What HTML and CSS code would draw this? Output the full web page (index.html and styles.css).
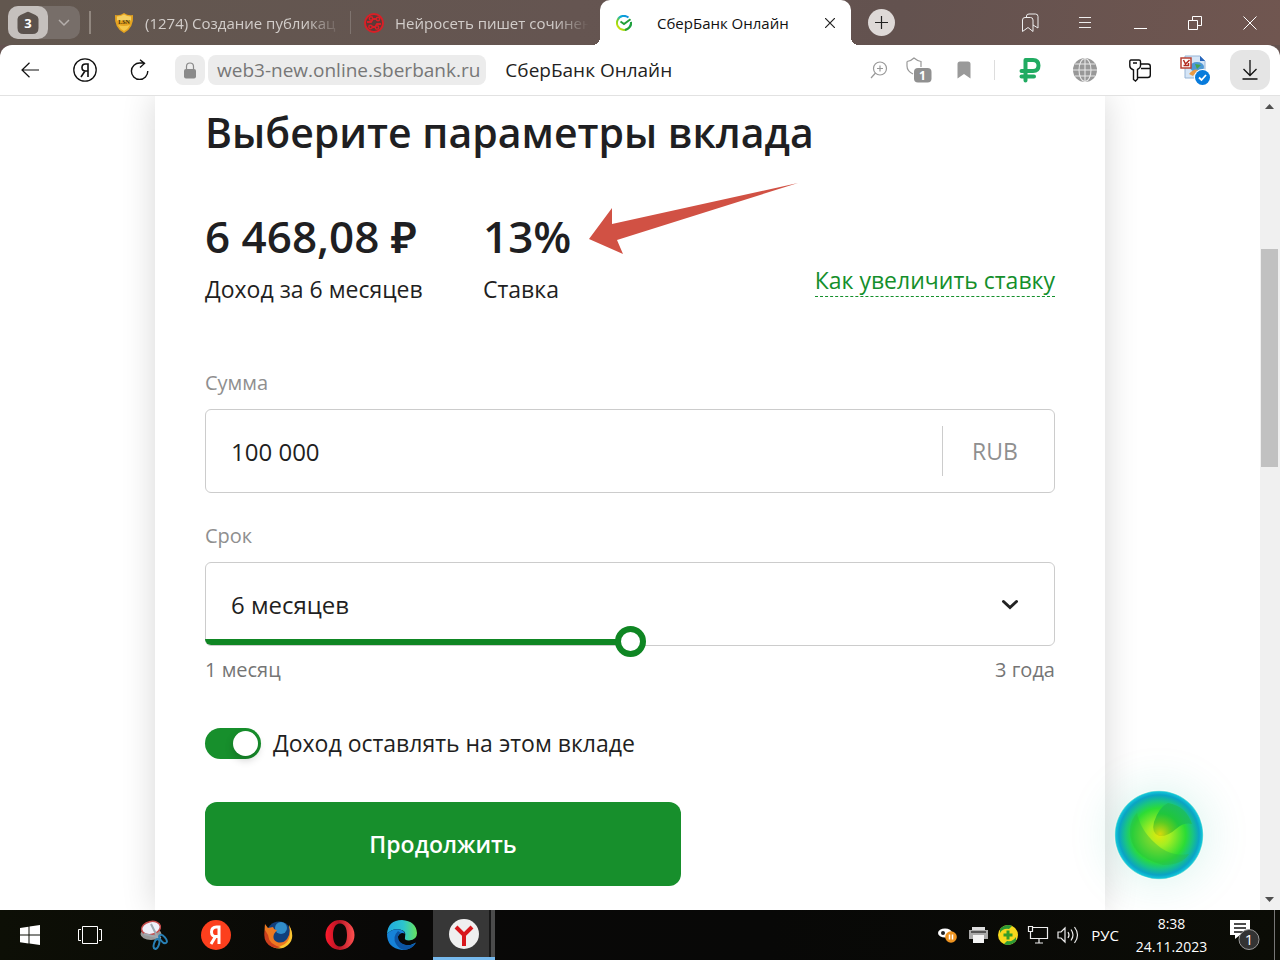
FILE: index.html
```html
<!DOCTYPE html>
<html lang="ru">
<head>
<meta charset="utf-8">
<title>СберБанк Онлайн</title>
<link rel="stylesheet" href="styles.css">
</head>
<body class="desktop">
<header class="tabstrip">
  <div class="tab-group">
    <button class="tab-count" aria-label="Группа вкладок">
      <svg width="22" height="24" viewBox="0 0 22 24"><path d="M9 1.500q2-1.300 4 0l5.500 2.500Q21.500 5.500 21.500 8v9q0 6-6 6h-9q-6 0-6-6V8Q.5 5.500 3.500 4z" fill="#5b524d"/></svg>
      <span class="tab-count-num">3</span>
    </button>
    <button class="tab-expand" aria-label="Показать группы"><svg width="12" height="8" viewBox="0 0 12 8"><path d="M1 1l5 5 5-5" fill="none" stroke="#b5afac" stroke-width="1.500"/></svg></button>
  </div>
  <i class="strip-line"></i>
  <button class="tab tab-first">
    <svg width="20" height="20" viewBox="0 0 20 20"><path d="M1 2q5 1 9-2 4 3 9 2 1 13-9 18Q0 15 1 2z" fill="#e5a420"/><path d="M3 3.500q4 0 7-2 3 2 7 2v4H3z" fill="#f3cf62"/><path d="M4 12q6 2 12 0-2 4-6 6-4-2-6-6z" fill="#f5c84b"/><text x="10" y="10.500" text-anchor="middle" class="lsn">LSN</text></svg>
    <span class="tab-title">(1274) Создание публикац</span>
  </button>
  <i class="strip-line thin"></i>
  <button class="tab tab-second">
    <svg width="20" height="20" viewBox="0 0 20 20"><circle cx="10" cy="10" r="9" fill="#5c3a38" stroke="#d91f26" stroke-width="2"/><path d="M3 9h4l2-3h4M17 11h-4l-2 3H8" fill="none" stroke="#d91f26" stroke-width="1.800"/><g fill="#5c3a38" stroke="#d91f26" stroke-width="1.500"><circle cx="7" cy="5.500" r="1.700"/><circle cx="14" cy="6" r="1.700"/><circle cx="6.500" cy="14" r="1.700"/><circle cx="13" cy="14.500" r="1.700"/></g></svg>
    <span class="tab-title">Нейросеть пишет сочинен</span>
  </button>
  <div class="tab-active">
    <svg width="16" height="16" viewBox="0 0 16 16"><defs><linearGradient id="sb" x1="0" y1="1" x2="1" y2="0"><stop offset="0" stop-color="#f4e600"/><stop offset=".35" stop-color="#7ed321"/><stop offset=".6" stop-color="#0cadd6"/><stop offset="1" stop-color="#1080e0"/></linearGradient></defs><path d="M12.500 2.600A7 7 0 1 0 14.900 7" fill="none" stroke="url(#sb)" stroke-width="2"/><path d="M15 7A7 7 0 0 1 9 14.900" fill="none" stroke="#21a038" stroke-width="2"/><path d="M4.500 6.500L8 9l6.500-4.800" fill="none" stroke="#21a038" stroke-width="2"/></svg>
    <span class="tab-active-title">СберБанк Онлайн</span>
    <button class="icon-btn" aria-label="Закрыть вкладку"><svg width="10" height="10" viewBox="0 0 10 10"><path d="M0 0l10 10M10 0L0 10" stroke="#222" stroke-width="1.200"/></svg></button>
  </div>
  <button class="tab-new" aria-label="Новая вкладка"><svg width="13" height="13" viewBox="0 0 13 13"><path d="M6.500 0v13M0 6.500h13" stroke="#222" stroke-width="1.200"/></svg></button>
  <div class="window-btns">
    <button class="win-btn" aria-label="Закладки"><svg width="18" height="20" viewBox="0 0 18 20" fill="none" stroke="#eee"><path d="M1.500 18.500V7q0-2.500 2.500-2.500h5.500Q12 4.500 12 7v11.500l-5-4z"/><path d="M5.500 4.500V3Q5.500 1 8 1h6.500Q17 1 17 3.500v11.500l-5-3"/></svg></button>
    <button class="win-btn" aria-label="Меню"><svg width="12" height="12" viewBox="0 0 12 12"><path d="M0 .5h12M0 5.500h12M0 10.500h12" stroke="#eee"/></svg></button>
    <button class="win-btn" aria-label="Свернуть"><svg width="14" height="14" viewBox="0 0 14 14"><path d="M1 12.500h13" stroke="#fff"/></svg></button>
    <button class="win-btn" aria-label="Развернуть"><svg width="14" height="14" viewBox="0 0 14 14" fill="none" stroke="#fff"><path d="M.5 4.500h9v9h-9zM4.500 4.500v-4h9v9h-4"/></svg></button>
    <button class="win-btn" aria-label="Закрыть"><svg width="14" height="14" viewBox="0 0 14 14"><path d="M.5.5l13 13M13.500.5l-13 13" stroke="#fff"/></svg></button>
  </div>
</header>

<nav class="toolbar">
  <div class="nav-btns">
    <button class="nav-btn" aria-label="Назад"><svg width="18" height="16" viewBox="0 0 18 16"><path d="M18 8H1M8.500.8L1 8l7.500 7.200" fill="none" stroke="#111" stroke-width="1.200"/></svg></button>
    <button class="nav-btn" aria-label="Яндекс"><svg width="24" height="24" viewBox="0 0 24 24" fill="none" stroke="#111" stroke-width="1.300"><circle cx="12" cy="12" r="11.200"/><path d="M15 19V6h-2.500Q9 6 9 9.500T12.500 13H15M12 13l-4 6" stroke-width="1.600"/></svg></button>
    <button class="nav-btn" aria-label="Обновить"><svg width="20" height="22" viewBox="0 0 20 22" fill="none" stroke="#111" stroke-width="1.400"><path d="M17.800 12A8.200 8.200 0 1 1 10 4h4.500M10 .7L14.500 4.400 10 8.500"/></svg></button>
  </div>
  <button class="lock" aria-label="Защищено"><svg width="12" height="17" viewBox="0 0 12 17"><path d="M2.500 8V4.500a3.500 3.500 0 0 1 7 0V8" fill="none" stroke="#8a8a8a" stroke-width="1.200"/><rect y="7" width="12" height="9.500" rx="2" fill="#8a8a8a"/></svg></button>
  <button class="url">web3-new.online.sberbank.ru</button>
  <span class="page-title">СберБанк Онлайн</span>
  <div class="page-tools">
    <button class="icon-btn" aria-label="Масштаб"><svg width="18" height="18" viewBox="0 0 18 18" fill="none" stroke="#999" stroke-width="1.200"><circle cx="10" cy="7.500" r="6.500"/><path d="M5.500 12L1 17M10 4.500v6M7 7.500h6"/></svg></button>
    <button class="icon-btn" aria-label="Защита"><svg width="26" height="26" viewBox="0 0 26 26"><path d="M1 4.500Q5 4 8 1q3.500 3 7 3.500V10M1 4.500V9q0 5 6 8" fill="none" stroke="#999" stroke-width="1.200"/><rect x="8" y="11" width="17.500" height="14.500" rx="4" fill="#909090"/><text x="16.500" y="23" text-anchor="middle" class="badge-num">1</text></svg></button>
    <button class="icon-btn" aria-label="В закладки"><svg width="14" height="18" viewBox="0 0 14 18"><path d="M.5 17.500V3q0-2.500 2.500-2.500h8q2.500 0 2.500 2.500v14.500L7 13z" fill="#999"/></svg></button>
  </div>
  <i class="tool-line"></i>
  <div class="ext-tools">
    <button class="ext-btn" aria-label="Кэшбэк"><svg width="22" height="26" viewBox="0 0 22 26"><path d="M6.500 23.500V3H14q5.500 0 5.500 5.500T14 14H2.500M2.500 19.500H15" fill="none" stroke="#21ab62" stroke-width="4" stroke-linecap="round" stroke-linejoin="round"/></svg></button>
    <button class="ext-btn" aria-label="Сеть"><svg width="24" height="24" viewBox="0 0 24 24"><circle cx="12" cy="12" r="12" fill="#989898"/><g fill="none" stroke="#e8e8e8" stroke-width="1.100"><ellipse cx="12" cy="12" rx="6" ry="11.500"/><path d="M12 0v24M0 12h24M2 6h20M2 18h20"/></g></svg></button>
    <button class="ext-btn" aria-label="Пароли"><svg width="22" height="23" viewBox="0 0 22 23" fill="#fff" stroke="#111" stroke-width="1.400"><path d="M9 6q1-1 3-1h7q2.300 0 2.300 2.500V16q0 2.500-2.500 2.500H9M12 9.500h9"/><path d="M2 1h8q1.500 0 1.500 1.500V7q0 2-3 3.500V20L6.500 22 4.500 20.500V11Q.8 9.500.8 7V2.500Q.8 1 2 1zM4 4h4"/></svg></button>
    <button class="ext-btn" aria-label="Перевод"><svg width="30" height="30" viewBox="0 0 30 30"><path d="M5 1h15l5 5v17H5z" fill="#d5e5f6" stroke="#97b4d5"/><path d="M20 1l5 5h-5z" fill="#2766bd"/><ellipse cx="17" cy="12" rx="7" ry="5" fill="#4d98d5"/><path d="M15 9l6 1-4 4z" fill="#46a349"/><path d="M9 19q5-6 9-4l-5 6z" fill="#e99a45"/><rect x="1" y="3" width="10" height="10" fill="#fff" stroke="#b94235" stroke-width="1.500"/><path d="M3.500 5l2 4 4-4M3.500 10.500h5V8" fill="none" stroke="#b32b20" stroke-width="1.500"/><circle cx="22.500" cy="22.500" r="8.500" fill="#fff"/><circle cx="22.500" cy="22.500" r="7.500" fill="#087bdc"/><path d="M19 22.500l2.500 2.500 4.500-5" fill="none" stroke="#fff" stroke-width="1.800"/></svg></button>
    <button class="ext-btn download" aria-label="Загрузки"><svg width="16" height="20" viewBox="0 0 16 20" fill="none" stroke="#111" stroke-width="1.300"><path d="M8 0v15M1.500 9L8 15.500 14.500 9M.5 19h15"/></svg></button>
  </div>
</nav>

<div class="viewport">
  <main class="page">
    <section class="card">
      <h1 class="title">Выберите параметры вклада</h1>
      <div class="stats">
        <div class="stat"><strong class="stat-value">6 468,08 ₽</strong><span class="stat-label">Доход за 6 месяцев</span></div>
        <div class="stat"><strong class="stat-value">13%</strong><span class="stat-label">Ставка</span></div>
        <a class="hint" href="#rate">Как увеличить ставку</a>
        <svg class="pointer" width="210" height="74" viewBox="0 0 210 74"><path d="M0 56L23 25V41L209 0 28 57l6 14z" fill="#d15144"/></svg>
      </div>
      <form class="form">
        <label class="label" for="sum">Сумма</label>
        <div class="box sum-box">
          <input class="value" id="sum" type="text" value="100 000">
          <span class="currency">RUB</span>
        </div>
        <label class="label" for="term">Срок</label>
        <div class="box term-box">
          <select class="value term" id="term"><option>6 месяцев</option></select>
          <svg class="chevron" width="18" height="12" viewBox="0 0 18 12"><path d="M2.500 3.500L9 9.500l6.500-6" fill="none" stroke="#222" stroke-width="3" stroke-linecap="round"/></svg>
          <input class="range" type="range" min="0" max="100" value="50" aria-label="Срок вклада">
        </div>
        <div class="scale"><span>1 месяц</span><span>3 года</span></div>
        <div class="option">
          <input class="switch" type="checkbox" id="keep" checked>
          <label class="option-label" for="keep">Доход оставлять на этом вкладе</label>
        </div>
        <button class="submit" type="button">Продолжить</button>
      </form>
    </section>
    <button class="assistant" aria-label="Ассистент">
      <svg width="90" height="90" viewBox="0 0 90 90"><defs><radialGradient id="orb"><stop offset="0" stop-color="#e0e80c"/><stop offset=".25" stop-color="#a5ee22"/><stop offset=".6" stop-color="#2cdc35"/><stop offset=".76" stop-color="#19c484"/><stop offset=".9" stop-color="#0aa3c4"/><stop offset=".97" stop-color="#12c3d8"/><stop offset="1" stop-color="#b9f0dc"/></radialGradient><radialGradient id="leaf" gradientUnits="userSpaceOnUse" cx="46" cy="44" r="34"><stop offset="0" stop-color="#d9d80c"/><stop offset=".35" stop-color="#5ccc22"/><stop offset=".6" stop-color="#20c63c"/><stop offset="1" stop-color="#1cbc68"/></radialGradient></defs><circle cx="45" cy="45" r="44.500" fill="url(#orb)"/><path d="M78 34q-8-2-16 5-9 8-17 7-8-3-5-14 5-15 14-19 18 3 24 21z" fill="url(#leaf)"/><path d="M23 23q4 20 24 35 13 9 28 6-7 11-26 11Q15 66 16 40q1-11 7-17z" fill="#28b944" opacity=".4"/></svg>
    </button>
  </main>
  <div class="scrollbar">
    <svg width="9" height="5" viewBox="0 0 9 5"><path d="M0 5l4.500-5L9 5z" fill="#505050"/></svg>
    <i class="scroll-thumb"></i>
    <svg width="9" height="5" viewBox="0 0 9 5"><path d="M0 0l4.500 5L9 0z" fill="#505050"/></svg>
  </div>
</div>

<footer class="taskbar">
  <button class="start" aria-label="Пуск"><svg width="20" height="20" viewBox="0 0 20 20" fill="#fff"><path d="M0 3l8.500-1.300v7.800H0zM9.500 1.500L20 0v9.500H9.500zM0 10.500h8.500v8L0 17.200zM9.500 10.500H20V20L9.500 18.600z"/></svg></button>
  <button class="start" aria-label="Представление задач"><svg width="24" height="18" viewBox="0 0 24 18" fill="none" stroke="#fff"><path d="M4.500.5h15v17h-15zM3 3.500H.5v11H3M21 3.500h2.500v11H21"/></svg></button>
  <div class="apps">
    <button class="app" aria-label="Ножницы"><svg width="30" height="30" viewBox="0 0 30 30"><ellipse cx="12" cy="14" rx="10.500" ry="6" fill="#999"/><ellipse cx="12" cy="8" rx="9.500" ry="6.500" fill="#eef0fa" stroke="#c64b4b" stroke-width="1.500" transform="rotate(-12 12 8)"/><path d="M12 4l7 14M5 14l17 4" stroke="#9fa8b0" stroke-width="2"/><g fill="none" stroke="#287fb4" stroke-width="2"><ellipse cx="24" cy="19" rx="2.500" ry="5" transform="rotate(-40 24 19)"/><ellipse cx="17.500" cy="24" rx="2.500" ry="5" transform="rotate(18 17.500 24)"/></g></svg></button>
    <button class="app" aria-label="Яндекс"><svg width="30" height="30" viewBox="0 0 30 30"><circle cx="15" cy="15" r="15" fill="#fc3f1d"/><path d="M18 24V7h-2.500Q10.500 7 10.500 12T16 16.500h2M14.500 16.500L10 24" fill="none" stroke="#fff" stroke-width="3"/></svg></button>
    <button class="app" aria-label="Firefox"><svg width="30" height="30" viewBox="0 0 30 30"><circle cx="16" cy="14" r="12.500" fill="#123f7c"/><circle cx="18" cy="8" r="6" fill="#318cc9"/><path d="M26 5q6 11-1 18-8 8-17 3-8-5-6-22l3 4 5-1q1 3 4 3l-3 4q-2 6 3 8 6 2 10-3 4-5 2-14z" fill="#ed7821"/><path d="M26 5q7 13-1 20-7 6-15 2 10 0 14-5 5-6 2-17z" fill="#f9c531"/><path d="M2 10q-3 12 7 17 5 2 9 0-12-2-13-12z" fill="#cb3f1d"/></svg></button>
    <button class="app" aria-label="Opera"><svg width="30" height="30" viewBox="0 0 30 30"><defs><linearGradient id="op"><stop stop-color="#ff1b2d"/><stop offset=".45" stop-color="#b51424"/><stop offset="1" stop-color="#ff5050"/></linearGradient></defs><path fill-rule="evenodd" d="M15 0a14.500 15 0 1 0 0 30 14.500 15 0 1 0 0-30zM15 3.500c5 0 7 5 7 11.500s-2 11.500-7 11.500S8 21 8 15 10 3.500 15 3.500z" fill="url(#op)"/></svg></button>
    <button class="app" aria-label="Edge"><svg width="30" height="30" viewBox="0 0 30 30"><defs><linearGradient id="edg"><stop stop-color="#1fa7df"/><stop offset=".55" stop-color="#2dc5cd"/><stop offset="1" stop-color="#67e35c"/></linearGradient></defs><path d="M0 14Q1 0 15 0q14 1 15 13 0 7-8 7.500-5 0-4-3 2-7-5-8Q5 8 0 14z" fill="url(#edg)"/><path d="M0 14Q5 8 13 9.500q4 1 5 4-5-2-7 3-1 7 8 9 5 0 10-3-5 8-14 7.500Q0 28 0 14z" fill="#1683d8"/><path d="M11 11q-6 6-2 13 3 5 8 6 8-1 12-7-5 3-10 2-8-2-8-8 0-3 3-4z" fill="#0c55a4"/></svg></button>
    <button class="app current" aria-label="Яндекс Браузер"><svg width="30" height="30" viewBox="0 0 30 30"><circle cx="15" cy="15" r="15" fill="#efefef"/><path d="M7 8l8 8 8-8M15 15v12" fill="none" stroke="#d8171c" stroke-width="4"/></svg></button>
  </div>
  <div class="tray">
    <svg width="30" height="20" viewBox="0 0 30 20"><ellipse cx="12" cy="8" rx="7" ry="4.500" fill="#fff"/><circle cx="10" cy="8" r="2" fill="#222"/><circle cx="18" cy="12" r="5.800" fill="#ef9420"/><path d="M16.500 9.500v5M19.500 9.500v5" stroke="#fff" stroke-width="1.500"/></svg>
    <svg width="30" height="20" viewBox="0 0 30 20"><path d="M9 2h13v4H9z" fill="#ddd"/><path d="M6 5h19v9H6z" fill="#aaa"/><path d="M8 6h15v2H8z" fill="#555"/><path d="M10 10h11v8H10z" fill="#f5f5f5"/></svg>
    <svg width="30" height="20" viewBox="0 0 30 20"><circle cx="15" cy="10" r="10" fill="#f6d81c"/><path d="M7 4a10 10 0 0 1 12-3l-3 3q-6-1-9 4zM23 16a10 10 0 0 1-12 3l3-3q6 1 9-4z" fill="#2c9a35"/><path d="M15 5.500v9M10.500 10h9" stroke="#349d29" stroke-width="3"/></svg>
    <svg width="30" height="20" viewBox="0 0 30 20" fill="none" stroke="#eee" stroke-width="1.200"><path d="M10 2.500h14.500v11H7.500V7M16 13.500V18M12 18h8M5.500 1.500h4v5h-4z"/></svg>
    <svg width="30" height="20" viewBox="0 0 30 20" fill="none" stroke="#eee" stroke-width="1.200"><path d="M5 7h3l4-4v14l-4-4H5zM15 7q2 3 0 6M18 4.500q4 5.500 0 11M21.500 2q6 8 0 16"/></svg>
    <span class="lang">РУС</span>
    <time class="clock"><span>8:38</span><span>24.11.2023</span></time>
    <button class="notices" aria-label="Уведомления"><svg width="32" height="32" viewBox="0 0 32 32"><path d="M1 1h20v15H11l-5 4v-4H1z" fill="#fff"/><path d="M5 5h12M5 9h12M5 13h9" stroke="#111" stroke-width="1.300"/><circle cx="20" cy="20.500" r="10" fill="#333" stroke="#999"/><text x="20" y="26" text-anchor="middle" class="notice-num">1</text></svg></button>
  </div>
</footer>
</body>
</html>
```
FILE: styles.css
```css
* { box-sizing: border-box; }
button { border: 0; padding: 0; background: none; font: inherit; color: inherit; }
svg { display: block; flex: none; }
.desktop {
  margin: 0;
  height: 100vh;
  display: flex;
  flex-direction: column;
  overflow: hidden;
  background: #63524f;
  font-family: "Open Sans", "Noto Sans", sans-serif;
  color: #1f1f22;
}

/* Tabs */
.tabstrip {
  flex: none;
  height: 45px;
  display: flex;
  align-items: center;
  padding-left: 8px;
  background: linear-gradient(100deg, #62574f, #655551 45%, #63524f 70%, #705650);
  font-size: 15px;
  color: #d2cdca;
}
.tab-group { display: flex; height: 33px; width: 72px; border-radius: 10px; background: #776e69; flex: none; }
.tab-count { position: relative; width: 40px; display: grid; place-items: center; border-radius: 10px; background: #c5c0bd; }
.tab-count-num { position: absolute; font-size: 13px; font-weight: 700; color: #fff; }
.tab-expand { flex: 1; display: grid; place-items: center; }
.strip-line { flex: none; width: 2px; height: 23px; margin-left: 9px; background: #91877f; }
.strip-line.thin { width: 1px; background: #7f746f; }
.tab { flex: none; display: flex; align-items: center; gap: 11px; overflow: hidden; white-space: nowrap; text-align: left; }
.tab-first { width: 227px; margin-left: 23px; }
.tab-second { width: 225px; margin-left: 13px; }
.tab-title { flex: 1; overflow: hidden; -webkit-mask-image: linear-gradient(90deg, #000 82%, transparent); mask-image: linear-gradient(90deg, #000 82%, transparent); }
.lsn { font: 700 6px "Liberation Serif", serif; fill: #46320c; }
.tab-active {
  position: relative;
  flex: none;
  align-self: stretch;
  width: 251px;
  margin-left: 11px;
  padding: 0 16px;
  display: flex;
  align-items: center;
  border-radius: 10px 10px 0 0;
  background: #fff;
  color: #111;
}
.tab-active::before, .tab-active::after { content: ""; position: absolute; bottom: 0; width: 8px; height: 8px; }
.tab-active::before { right: 100%; background: radial-gradient(circle at 0 0, transparent 8px, #fff 8px); }
.tab-active::after { left: 100%; background: radial-gradient(circle at 100% 0, transparent 8px, #fff 8px); }
.tab-active-title { flex: 1; padding-left: 25px; white-space: nowrap; }
.tab-new { flex: none; width: 27px; height: 27px; margin-left: 17px; display: grid; place-items: center; border-radius: 50%; background: #ded9d7; }
.window-btns { margin-left: auto; display: flex; padding-right: 3px; }
.win-btn { width: 55px; height: 45px; display: grid; place-items: center; }

/* Address bar */
.toolbar {
  flex: none;
  height: 51px;
  display: flex;
  align-items: center;
  border-bottom: 1px solid #e2e2e2;
  border-radius: 12px 12px 0 0;
  background: #fff;
  font-size: 19px;
}
.nav-btns { display: flex; padding-left: 2px; }
.nav-btn { width: 55px; height: 44px; display: grid; place-items: center; }
.lock { width: 30px; height: 30px; margin-left: 8px; display: grid; place-items: center; border-radius: 8px; background: #ececec; }
.url { height: 30px; margin-left: 3px; padding: 0 6px 0 9px; display: flex; align-items: center; border-radius: 8px; background: #ececec; color: #777; }
.page-title { margin-left: 19px; white-space: nowrap; }
.page-tools { margin-left: auto; display: flex; align-items: center; gap: 18px; }
.page-tools .icon-btn + .icon-btn + .icon-btn { margin-left: 7px; }
.tool-line { width: 1px; height: 20px; margin-left: 23px; background: #ddd; }
.ext-tools { display: flex; padding: 0 2px 0 7px; }
.ext-btn { width: 55px; height: 40px; display: grid; place-items: center; }
.download { width: 40px; margin: 0 8px; border-radius: 12px; background: #e5e5e5; }

/* Page */
.viewport { flex: 1; min-height: 0; display: flex; background: #fff; }
.page { position: relative; flex: 1; overflow: hidden; }
.card {
  max-width: 950px;
  min-height: 100%;
  margin: 0 auto;
  padding: 8px 50px 24px;
  background: #fff;
  box-shadow: 0 0 32px rgba(0, 0, 0, .16);
}
.title { margin: 0; font-size: 41px; line-height: 56px; font-weight: 600; }
.stats { position: relative; display: flex; margin-top: 48px; }
.stat { display: flex; flex-direction: column; min-width: 222px; margin-right: 56px; }
.stat + .stat { min-width: 0; }
.stat-value { font-size: 44px; line-height: 56px; font-weight: 600; white-space: nowrap; }
.stat-label { margin-top: 9px; font-size: 23px; line-height: 32px; }
.hint { align-self: flex-end; margin: 0 0 8px auto; border-bottom: 1px dashed #148f2b; font-size: 23px; line-height: 32px; color: #148f2b; text-decoration: none; }
.pointer { position: absolute; left: 384px; top: -25px; }
.form { margin-top: 66px; }
.label { display: block; font-size: 20px; line-height: 24px; color: #8f8f8f; }
.box { position: relative; display: flex; align-items: center; height: 84px; margin: 14px 0 31px; border: 1px solid #ccc; border-radius: 6px; }
.value { flex: 1; min-width: 0; height: 100%; padding: 0 25px; border: 0; outline: 0; background: none; font: 500 24px "Open Sans", "Noto Sans", sans-serif; color: #1f1f22; }
.currency { width: 112px; height: 50px; padding-left: 29px; border-left: 1px solid #ccc; font-size: 23px; line-height: 50px; color: #8f8f8f; }
.term-box { margin-bottom: 12px; }
.term { appearance: none; }
.chevron { position: absolute; right: 35px; pointer-events: none; }
.range { appearance: none; position: absolute; left: -1px; right: -1px; bottom: -12px; width: calc(100% + 2px); height: 31px; margin: 0; background: none; }
.range::-webkit-slider-runnable-track { height: 6px; border-radius: 0 0 0 6px; background: linear-gradient(90deg, #0f8623 50%, transparent 50%); }
.range::-webkit-slider-thumb { appearance: none; width: 31px; height: 31px; margin-top: -13px; border: 6px solid #0f8623; border-radius: 50%; background: #fff; }
.scale { display: flex; justify-content: space-between; font-size: 20px; line-height: 24px; color: #757575; }
.option { display: flex; align-items: center; gap: 12px; height: 32px; margin-top: 45px; }
.switch { appearance: none; width: 56px; height: 31px; margin: 0; padding: 3px; display: flex; justify-content: flex-end; border-radius: 16px; background: #178f2c; }
.switch::before { content: ""; width: 25px; height: 25px; border-radius: 50%; background: #fff; box-shadow: 0 4px 8px rgba(0, 0, 0, .2); }
.option-label { font-size: 23px; line-height: 32px; }
.submit { display: block; width: 56%; height: 84px; margin-top: 43px; border-radius: 12px; background: #178f2c; font-size: 23px; font-weight: 600; color: #fff; }
.assistant { position: absolute; right: 56px; bottom: 30px; border-radius: 50%; box-shadow: 0 0 48px rgba(30, 190, 150, .18); }
.scrollbar { flex: none; width: 20px; padding: 8px 2px 8px 0; display: flex; flex-direction: column; align-items: center; background: #f0f0f0; }
.scroll-thumb { width: 17px; height: 218px; margin: 140px 0 auto; background: #c1c1c1; }

/* Taskbar */
.taskbar { flex: none; height: 50px; display: flex; background: linear-gradient(90deg, #0d0f06, #090807 30%, #080807 60%, #0b0c06); color: #fff; }
.start { width: 60px; display: grid; place-items: center; }
.apps { display: flex; margin-left: 3px; }
.app { width: 62px; display: grid; place-items: center; }
.app.current { border-bottom: 3px solid #76b9ed; background: linear-gradient(90deg, #373737 56px, #181818 56px, #181818 58px, #4b4b4b 58px); }
.tray { margin-left: auto; display: flex; align-items: center; padding-right: 5px; font-size: 15px; }
.lang { margin-left: 8px; }
.clock { width: 105px; display: flex; flex-direction: column; align-items: center; font-size: 14px; line-height: 23px; }
.notices { width: 51px; height: 100%; padding-left: 5px; border-right: 1px solid #777; }
.badge-num { font: 700 12px "Open Sans", sans-serif; fill: #fff; }
.notice-num { font: 15px "Open Sans", sans-serif; fill: #fff; }
```
